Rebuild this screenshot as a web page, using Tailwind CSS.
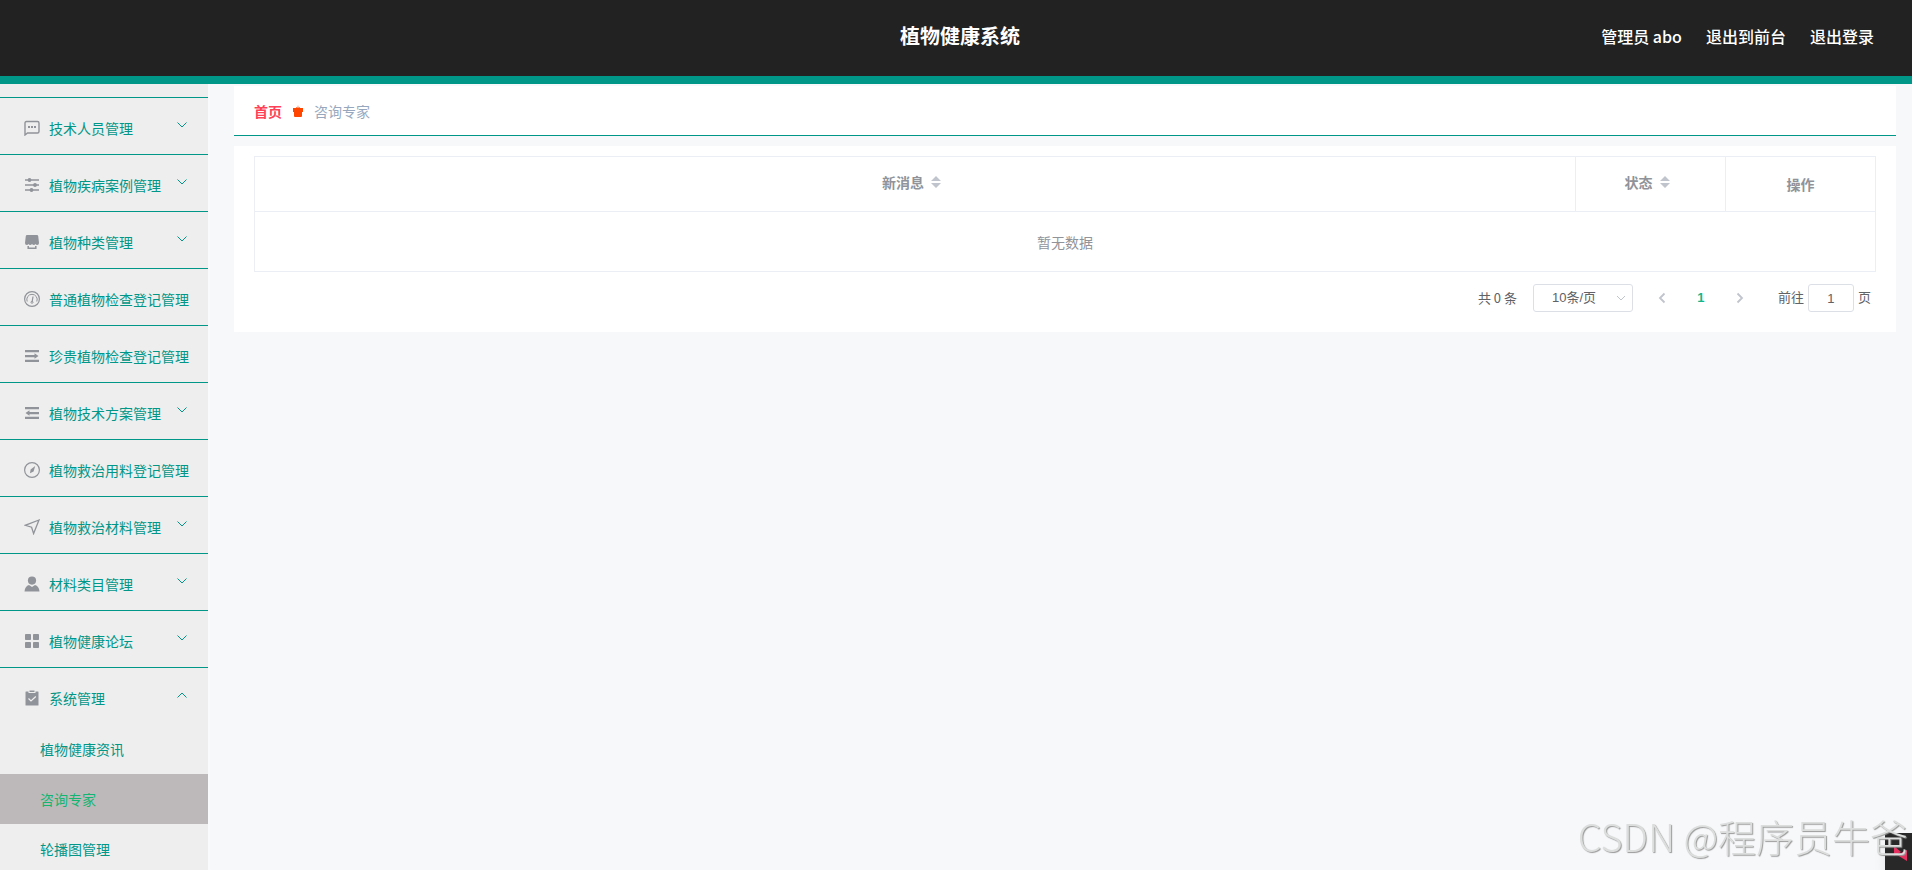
<!DOCTYPE html>
<html lang="zh-CN">
<head>
  <meta charset="UTF-8" />
  <title>植物健康系统</title>
  <meta name="viewport" content="width=device-width, initial-scale=1.0" />
  <script src="https://cdn.jsdelivr.net/npm/@tailwindcss/browser@4"></script>
</head>
<body class="h-screen flex flex-col overflow-hidden bg-[#f7f8fa] text-sm font-['Noto_Sans_CJK_SC',sans-serif]">

  <!-- Header -->
  <header class="relative flex h-[84px] shrink-0 items-center justify-end border-b-8 border-[#009688] bg-[#222222] pr-[38px] pb-1 text-white">
    <h1 class="absolute inset-x-0 pl-2 text-center text-xl font-bold pointer-events-none">植物健康系统</h1>
    <nav class="flex gap-6 text-base font-medium">
      <span>管理员 abo</span>
      <a href="#">退出到前台</a>
      <a href="#">退出登录</a>
    </nav>
  </header>

  <div class="flex min-h-0 flex-1">

    <!-- Sidebar -->
    <aside class="w-[210px] shrink-0 overflow-hidden border-r-2 border-[#f9fafc] bg-[#eeeeee] text-[#009688]">
      <ul>
        <li class="h-[14px] border-b border-[#009688]"></li>
        <li class="border-b border-[#009688]">
          <a href="#" class="flex h-14 items-center pt-1 pl-6 pr-5">
            <svg class="mr-[9px] h-4 w-4 text-[#909399]" viewBox="0 0 16 16" fill="none" stroke="currentColor">
              <path d="M1 15V3q0-1.500 1.500-1.500h11Q15 1.500 15 3v8.500q0 1.500-1.500 1.500H3.500z" stroke-width="1.400"/>
              <path d="M4 7h2M7 7h2M10 7h2" stroke-width="2"/>
            </svg>
            <span class="flex-1">技术人员管理</span>
            <svg class="mb-[6px] h-3 w-3" viewBox="0 0 12 12" fill="none" stroke="currentColor"><path d="M1.500 3.500 6 8l4.500-4.500"/></svg>
          </a>
        </li>
        <li class="border-b border-[#009688]">
          <a href="#" class="flex h-14 items-center pt-1 pl-6 pr-5">
            <svg class="mr-[9px] h-4 w-4 text-[#909399]" viewBox="0 0 16 16" fill="currentColor">
              <path d="M1 2.300h14v1.400H1zM1 7.300h14v1.400H1zM1 12.300h14v1.400H1z"/>
              <circle cx="5.500" cy="3" r="1.900"/><circle cx="11" cy="8" r="1.900"/><circle cx="7.500" cy="13" r="1.900"/>
            </svg>
            <span class="flex-1">植物疾病案例管理</span>
            <svg class="mb-[6px] h-3 w-3" viewBox="0 0 12 12" fill="none" stroke="currentColor"><path d="M1.500 3.500 6 8l4.500-4.500"/></svg>
          </a>
        </li>
        <li class="border-b border-[#009688]">
          <a href="#" class="flex h-14 items-center pt-1 pl-6 pr-5">
            <svg class="mr-[9px] h-4 w-4 text-[#909399]" viewBox="0 0 16 16" fill="currentColor">
              <path d="M3 1h10q1 0 1.200 1L15 9q0 2-1.800 2-1.200 0-1.700-1-.600 1-1.700 1T8 10q-.700 1-1.800 1t-1.700-1q-.500 1-1.700 1Q1 11 1 9l.800-7Q2 1 3 1z"/>
              <path d="M4.200 12v2.200h7.600V12" fill="none" stroke="currentColor" stroke-width="1.500"/>
            </svg>
            <span class="flex-1">植物种类管理</span>
            <svg class="mb-[6px] h-3 w-3" viewBox="0 0 12 12" fill="none" stroke="currentColor"><path d="M1.500 3.500 6 8l4.500-4.500"/></svg>
          </a>
        </li>
        <li class="border-b border-[#009688]">
          <a href="#" class="flex h-14 items-center pt-1 pl-6">
            <svg class="mr-[9px] h-4 w-4 text-[#909399]" viewBox="0 0 16 16" fill="none" stroke="currentColor">
              <circle cx="8" cy="8" r="7.400" stroke-width="1.200"/>
              <path d="M3.200 10.500A5.200 5.200 0 1 1 12.800 10.500" stroke-width="1"/>
              <path d="M9 5.500 8.200 10.500" stroke-width="1.200"/>
              <circle cx="8" cy="11.300" r="1"/>
            </svg>
            <span class="whitespace-nowrap">普通植物检查登记管理</span>
          </a>
        </li>
        <li class="border-b border-[#009688]">
          <a href="#" class="flex h-14 items-center pt-1 pl-6">
            <svg class="mr-[9px] h-4 w-4 text-[#909399]" viewBox="0 0 16 16" fill="currentColor">
              <path d="M1 2h14v2.300H1zM1 7h9.500v2.200H1zM1 11.800h14V14H1zM10.500 5.200 14.500 8 10.500 10.800z"/>
            </svg>
            <span class="whitespace-nowrap">珍贵植物检查登记管理</span>
          </a>
        </li>
        <li class="border-b border-[#009688]">
          <a href="#" class="flex h-14 items-center pt-1 pl-6 pr-5">
            <svg class="mr-[9px] h-4 w-4 text-[#909399]" viewBox="0 0 16 16" fill="currentColor">
              <path d="M1 2h14v2.300H1zM5.500 7H15v2.200H5.500zM1 11.800h14V14H1zM5.500 5.200 1.500 8 5.500 10.800z"/>
            </svg>
            <span class="flex-1">植物技术方案管理</span>
            <svg class="mb-[6px] h-3 w-3" viewBox="0 0 12 12" fill="none" stroke="currentColor"><path d="M1.500 3.500 6 8l4.500-4.500"/></svg>
          </a>
        </li>
        <li class="border-b border-[#009688]">
          <a href="#" class="flex h-14 items-center pt-1 pl-6">
            <svg class="mr-[9px] h-4 w-4 text-[#909399]" viewBox="0 0 16 16" fill="none" stroke="currentColor">
              <circle cx="8" cy="8" r="7.400" stroke-width="1.200"/>
              <path d="M11.200 4 9.600 9.400 6 11.200 6.600 7.500z" fill="currentColor" stroke="none"/>
            </svg>
            <span class="whitespace-nowrap">植物救治用料登记管理</span>
          </a>
        </li>
        <li class="border-b border-[#009688]">
          <a href="#" class="flex h-14 items-center pt-1 pl-6 pr-5">
            <svg class="mr-[9px] h-4 w-4 text-[#909399]" viewBox="0 0 16 16" fill="none" stroke="currentColor">
              <path d="M15 1 1.200 6.300 7.600 8.200 9.600 14.600z" stroke-width="1.300"/>
            </svg>
            <span class="flex-1">植物救治材料管理</span>
            <svg class="mb-[6px] h-3 w-3" viewBox="0 0 12 12" fill="none" stroke="currentColor"><path d="M1.500 3.500 6 8l4.500-4.500"/></svg>
          </a>
        </li>
        <li class="border-b border-[#009688]">
          <a href="#" class="flex h-14 items-center pt-1 pl-6 pr-5">
            <svg class="mr-[9px] h-4 w-4 text-[#909399]" viewBox="0 0 16 16" fill="currentColor">
              <circle cx="8" cy="4.600" r="4.100"/>
              <path d="M5 9 8 11l3-2q4 1 4.500 6.500H.500Q1 10 5 9z"/>
            </svg>
            <span class="flex-1">材料类目管理</span>
            <svg class="mb-[6px] h-3 w-3" viewBox="0 0 12 12" fill="none" stroke="currentColor"><path d="M1.500 3.500 6 8l4.500-4.500"/></svg>
          </a>
        </li>
        <li class="border-b border-[#009688]">
          <a href="#" class="flex h-14 items-center pt-1 pl-6 pr-5">
            <svg class="mr-[9px] h-4 w-4 text-[#909399]" viewBox="0 0 16 16" fill="currentColor">
              <rect x="1" y="1" width="6" height="6" rx=".8"/><rect x="9" y="1" width="6" height="6" rx=".8"/>
              <rect x="1" y="9" width="6" height="6" rx=".8"/><rect x="9" y="9" width="6" height="6" rx=".8"/>
            </svg>
            <span class="flex-1">植物健康论坛</span>
            <svg class="mb-[6px] h-3 w-3" viewBox="0 0 12 12" fill="none" stroke="currentColor"><path d="M1.500 3.500 6 8l4.500-4.500"/></svg>
          </a>
        </li>
        <li>
          <a href="#" class="flex h-14 items-center pt-1 pl-6 pr-5">
            <svg class="mr-[9px] h-4 w-4 text-[#909399]" viewBox="0 0 16 16">
              <path d="M2 1.500h2.500V3h7V1.500H14q.500 0 .500.500v13q0 .500-.500.500H2q-.500 0-.500-.500V2q0-.500.500-.500zM5.500.500h5V2h-5z" fill="currentColor"/>
              <path d="m4.500 8.500 2.500 2.500 4.800-4.500" fill="none" stroke="#eeeeee" stroke-width="1.200"/>
            </svg>
            <span class="flex-1">系统管理</span>
            <svg class="mb-[6px] h-3 w-3" viewBox="0 0 12 12" fill="none" stroke="currentColor"><path d="M1.500 8.500 6 4l4.500 4.500"/></svg>
          </a>
          <!-- Submenu -->
          <ul>
            <li><a href="#" class="flex h-[50px] items-center pl-10">植物健康资讯</a></li>
            <li><a href="#" class="flex h-[50px] items-center bg-[#bdb9ba] pl-10 text-[#13b571]">咨询专家</a></li>
            <li><a href="#" class="flex h-[50px] items-center pl-10">轮播图管理</a></li>
          </ul>
        </li>
      </ul>
    </aside>

    <!-- Main Content -->
    <main class="min-w-0 flex-1 pt-[2px] pr-4 pl-6">
      <nav class="flex h-[50px] items-center border-b border-[#009688] bg-white px-5">
        <a href="#" class="font-bold text-[#ff4157]">首页</a>
        <svg class="mx-[9px] h-[14px] w-[14px] text-[#ff4500]" viewBox="0 0 14 14" fill="currentColor">
          <path d="M2 4h3L5.500 3l1 1L7 1l.500 3 1-1L9 4h3v4h-1v4q0 1-1 1H4q-1 0-1-1V8H2z"/>
        </svg>
        <span class="text-[#97a8be]">咨询专家</span>
      </nav>

      <section class="mt-[10px] bg-white px-5 pt-[10px] pb-5">
        <table class="w-full table-fixed border-collapse border border-[#ebeef5] text-center text-[#909399]">
          <thead>
            <tr class="h-[55px] font-bold">
              <th class="border border-[#ebeef5]">
                <div class="flex items-center justify-center gap-[7px] pr-[7px] pb-[5px]">
                  新消息
                  <svg class="h-3 w-[10px] text-[#c0c4cc]" viewBox="0 0 10 12" fill="currentColor"><path d="M5 0l5 5H0zM0 7h10l-5 5z"/></svg>
                </div>
              </th>
              <th class="w-[150px] border border-[#ebeef5]">
                <div class="flex items-center justify-center gap-[7px] pr-[7px] pb-[5px]">
                  状态
                  <svg class="h-3 w-[10px] text-[#c0c4cc]" viewBox="0 0 10 12" fill="currentColor"><path d="M5 0l5 5H0zM0 7h10l-5 5z"/></svg>
                </div>
              </th>
              <th class="w-[150px] border border-[#ebeef5]">操作</th>
            </tr>
          </thead>
          <tbody>
            <tr class="h-[60px]">
              <td colspan="3" class="border border-[#ebeef5]">暂无数据</td>
            </tr>
          </tbody>
        </table>

        <!-- Pagination -->
        <div class="mt-3 flex h-7 items-center justify-end pr-[5px] text-[13px] text-[#606266] font-['Liberation_Sans','Noto_Sans_CJK_SC',sans-serif]">
          <span class="mr-4 font-['Noto_Sans_CJK_SC',sans-serif]">共 0 条</span>
          <div class="relative">
            <select aria-label="每页条数" class="block h-7 w-[100px] appearance-none rounded-[3px] border border-[#dcdfe6] bg-white pl-[18px]">
              <option>10条/页</option>
            </select>
            <svg class="pointer-events-none absolute right-[6px] top-2 h-3 w-3 text-[#c0c4cc]" viewBox="0 0 12 12" fill="none" stroke="currentColor"><path d="M2 4l4 4 4-4"/></svg>
          </div>
          <button type="button" aria-label="上一页" class="ml-[23px] text-[#c0c4cc]">
            <svg class="h-3 w-3" viewBox="0 0 12 12" fill="none" stroke="currentColor" stroke-width="1.800"><path d="M8.500 1.500 4 6l4.500 4.500"/></svg>
          </button>
          <button type="button" class="mx-[14px] w-[38px] font-bold text-[#13b58b]">1</button>
          <button type="button" aria-label="下一页" class="text-[#c0c4cc]">
            <svg class="h-3 w-3" viewBox="0 0 12 12" fill="none" stroke="currentColor" stroke-width="1.800"><path d="M3.500 1.500 8 6l-4.500 4.500"/></svg>
          </button>
          <label for="page" class="ml-8">前往</label>
          <input id="page" type="text" value="1" class="mx-1 h-7 w-[46px] rounded-[3px] border border-[#dcdfe6] bg-white text-center" />
          <span>页</span>
        </div>
      </section>
    </main>
  </div>

  <!-- Corner widget -->
  <div class="fixed right-0 bottom-0 h-[37px] w-[27px] bg-[#282828] shadow-lg">
    <svg class="h-full w-full" viewBox="0 0 27 37" fill="#e6305f"><path d="M9 13l7 6-7 4zM22 17v11l-10-6z"/></svg>
  </div>

  <!-- Watermark -->
  <div class="pointer-events-none fixed right-1 bottom-[10px] whitespace-nowrap text-[38px] leading-[48px] font-light text-[#dcdddd] [text-shadow:1px_1px_1px_#999999]">CSDN @程序员牛爸</div>
</body>
</html>
